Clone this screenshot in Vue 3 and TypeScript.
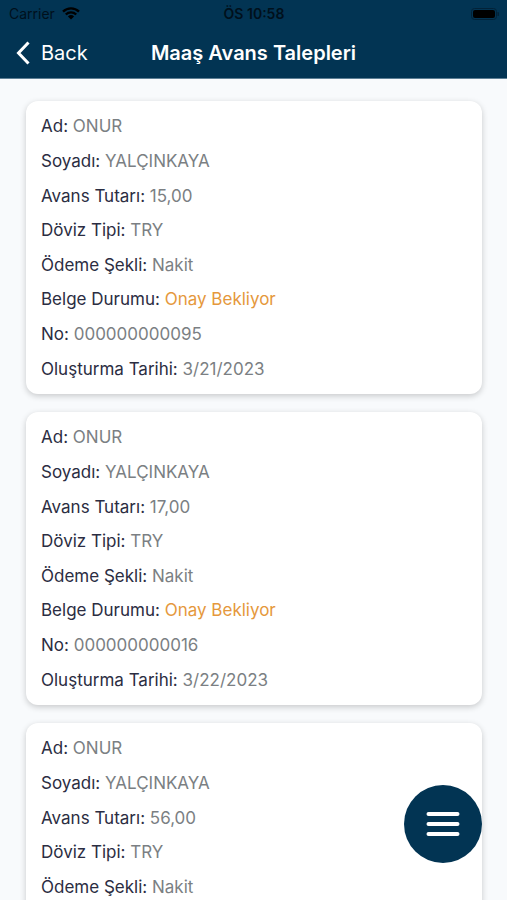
<script setup lang="ts">
interface Field {
  label: string
  value: string
  pending?: boolean
}

interface AdvanceRequest {
  id: number
  fields: Field[]
}

const requests: AdvanceRequest[] = [
  {
    id: 1,
    fields: [
      { label: 'Ad:', value: 'ONUR' },
      { label: 'Soyadı:', value: 'YALÇINKAYA' },
      { label: 'Avans Tutarı:', value: '15,00' },
      { label: 'Döviz Tipi:', value: 'TRY' },
      { label: 'Ödeme Şekli:', value: 'Nakit' },
      { label: 'Belge Durumu:', value: 'Onay Bekliyor', pending: true },
      { label: 'No:', value: '000000000095' },
      { label: 'Oluşturma Tarihi:', value: '3/21/2023' },
    ],
  },
  {
    id: 2,
    fields: [
      { label: 'Ad:', value: 'ONUR' },
      { label: 'Soyadı:', value: 'YALÇINKAYA' },
      { label: 'Avans Tutarı:', value: '17,00' },
      { label: 'Döviz Tipi:', value: 'TRY' },
      { label: 'Ödeme Şekli:', value: 'Nakit' },
      { label: 'Belge Durumu:', value: 'Onay Bekliyor', pending: true },
      { label: 'No:', value: '000000000016' },
      { label: 'Oluşturma Tarihi:', value: '3/22/2023' },
    ],
  },
  {
    id: 3,
    fields: [
      { label: 'Ad:', value: 'ONUR' },
      { label: 'Soyadı:', value: 'YALÇINKAYA' },
      { label: 'Avans Tutarı:', value: '56,00' },
      { label: 'Döviz Tipi:', value: 'TRY' },
      { label: 'Ödeme Şekli:', value: 'Nakit' },
    ],
  },
]
</script>

<template>
  <div class="screen">
    <header class="header">
      <div class="status">
        <span class="carrier">
          Carrier
          <svg class="wifi" viewBox="0 0 18 13" aria-hidden="true">
            <path d="M1 4.6a11.5 11.5 0 0 1 16 0" />
            <path d="M3.8 7.5a7.5 7.5 0 0 1 10.4 0" />
            <path class="dot" d="M9 12.6 5.9 9.5a4.5 4.5 0 0 1 6.2 0z" />
          </svg>
        </span>
        <span class="time">ÖS 10:58</span>
        <svg class="battery" viewBox="0 0 28 12" aria-hidden="true">
          <rect class="shell" x="0.5" y="0.5" width="25" height="11" rx="3" />
          <rect x="2" y="2" width="22" height="8" rx="2" />
          <path class="shell-tip" d="M26.5 4v4a2 2 0 0 0 0-4z" />
        </svg>
      </div>
      <nav class="nav">
        <button class="back" type="button">
          <svg class="chevron" viewBox="0 0 14 24" aria-hidden="true">
            <path d="M12.5 1.5 2.5 12l10 10.5" />
          </svg>
          Back
        </button>
        <h1 class="title">Maaş Avans Talepleri</h1>
      </nav>
    </header>

    <main class="list">
      <article v-for="request in requests" :key="request.id" class="card">
        <p v-for="field in request.fields" :key="field.label" class="field">
          <span class="label">{{ field.label }}</span>
          {{ ' ' }}
          <span class="value" :class="{ pending: field.pending }">{{ field.value }}</span>
        </p>
      </article>
    </main>

    <button class="menu" type="button" aria-label="Menü">
      <svg viewBox="0 0 34 26" aria-hidden="true">
        <path d="M2.5 3h29M2.5 13h29M2.5 23h29" />
      </svg>
    </button>
  </div>
</template>

<style>
body {
  margin: 0;
}
</style>

<style scoped>
.screen {
  position: relative;
  display: flex;
  flex-direction: column;
  height: 100vh;
  overflow: hidden;
  background: #f8fafc;
  font-family: Inter, 'Liberation Sans', sans-serif;
}

.header {
  flex: none;
  background: #023453;
  border-bottom: 1px solid #5d7f95;
}

.status {
  display: grid;
  grid-template-columns: 1fr auto 1fr;
  align-items: center;
  height: 27px;
  padding: 0 8px 0 9px;
  color: #00101c;
  font-size: 14px;
}

.carrier {
  display: flex;
  align-items: center;
  gap: 7px;
}

.wifi {
  width: 18px;
  height: 13px;
  fill: none;
  stroke: #000;
  stroke-width: 2.4;
}

.wifi .dot {
  fill: #000;
  stroke: none;
}

.time {
  font-weight: 600;
}

.battery {
  justify-self: end;
  width: 28px;
  height: 12px;
}

.shell {
  fill: none;
  stroke: #022238;
}

.shell-tip {
  fill: #022238;
}

.nav {
  display: grid;
  grid-template-columns: 1fr auto 1fr;
  align-items: center;
  height: 51px;
  padding: 0 16px;
  color: #fff;
}

.back {
  display: flex;
  align-items: center;
  justify-self: start;
  gap: 11px;
  padding: 0;
  border: 0;
  background: none;
  color: inherit;
  font-family: inherit;
  font-size: 20px;
  cursor: pointer;
}

.chevron {
  width: 14px;
  height: 24px;
  fill: none;
  stroke: #fff;
  stroke-width: 3;
}

.title {
  margin: 0;
  font-size: 20px;
  font-weight: 600;
}

.list {
  display: flex;
  flex: 1;
  flex-direction: column;
  gap: 18px;
  min-height: 0;
  padding: 22px 25px 0 26px;
  overflow-y: auto;
  scrollbar-width: none;
}

.card {
  display: grid;
  flex: none;
  grid-template-rows: repeat(8, 1fr);
  align-items: center;
  box-sizing: border-box;
  min-height: 293px;
  padding: 8px 15px;
  border-radius: 12px;
  background: #fff;
  box-shadow: 0 2px 6px rgba(0, 0, 0, 0.2);
}

.field {
  margin: 0;
  font-size: 17px;
  line-height: 24px;
}

.label {
  color: #2b2d42;
}

.value {
  color: #7b7f83;
}

.pending {
  color: #e5983c;
}

.menu {
  position: absolute;
  right: 25px;
  bottom: 37px;
  display: flex;
  align-items: center;
  justify-content: center;
  width: 78px;
  height: 78px;
  padding: 0;
  border: 0;
  border-radius: 50%;
  background: #023453;
  cursor: pointer;
}

.menu svg {
  width: 34px;
  height: 26px;
  fill: none;
  stroke: #fff;
  stroke-width: 4;
  stroke-linecap: round;
}
</style>
